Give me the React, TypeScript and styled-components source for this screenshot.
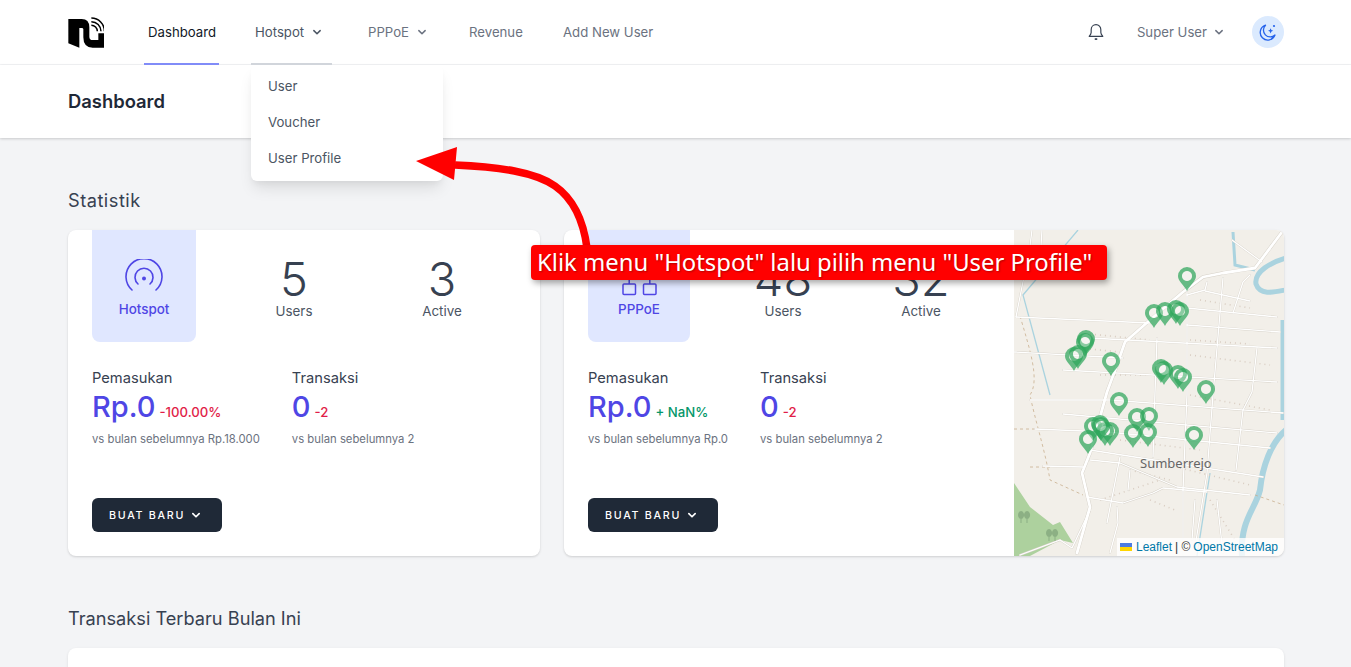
import styled, { createGlobalStyle } from "styled-components";

const GlobalStyle = createGlobalStyle`
  html, body {
    margin: 0;
    height: 667px;
    overflow: hidden;
    background: #f3f4f6;
    font-family: "Inter", "Noto Sans", sans-serif;
  }
  * { box-sizing: border-box; }
`;

const Page = styled.div`
  position: relative;
  width: 1351px;
  height: 667px;
  overflow: hidden;
`;

const Navbar = styled.nav`
  height: 65px;
  background: #fff;
  border-bottom: 1px solid #f3f4f6;
  padding: 0 67px 0 68px;
  display: flex;
  align-items: stretch;
`;

const LogoBox = styled.div`
  width: 36px;
  margin-right: 40px;
  display: flex;
  align-items: center;
`;

const NavLinks = styled.div`
  display: flex;
  gap: 32px;
  flex: 1;
`;

const NavItem = styled.div<{ $active?: boolean; $open?: boolean; $width: number }>`
  position: relative;
  display: flex;
  align-items: center;
  gap: 6px;
  width: ${(p) => p.$width}px;
  height: 65px;
  padding: 0 4px;
  font-size: 13.2px;
  white-space: nowrap;
  color: ${(p) => (p.$active ? "#111827" : p.$open ? "#4b5563" : "#6b7280")};
  border-bottom: 2px solid
    ${(p) => (p.$active ? "#818cf8" : p.$open ? "#d1d5db" : "transparent")};
`;

const Dropdown = styled.div`
  position: absolute;
  top: 65px;
  left: 0;
  width: 192px;
  padding: 3px 0 5px;
  background: #fff;
  border-radius: 6px;
  box-shadow: 0 10px 15px -3px rgba(0, 0, 0, 0.1), 0 4px 6px -2px rgba(0, 0, 0, 0.05);
  z-index: 5;
`;

const DropdownItem = styled.div`
  height: 36px;
  padding: 0 17px;
  display: flex;
  align-items: center;
  font-size: 13.2px;
  color: #4b5563;
`;

const NavRight = styled.div`
  display: flex;
  align-items: center;
`;

const BellButton = styled.div`
  display: flex;
  margin-right: 31px;
  color: #374151;
`;

const UserMenu = styled.div`
  display: flex;
  align-items: center;
  gap: 5px;
  font-size: 13.2px;
  color: #6b7280;
  margin-right: 26px;
`;

const ThemeButton = styled.div`
  width: 32px;
  height: 32px;
  border-radius: 50%;
  background: #dbeafe;
  display: flex;
  align-items: center;
  justify-content: center;
`;

const PageHeader = styled.header`
  height: 73px;
  background: #fff;
  padding: 0 68px 2px;
  display: flex;
  align-items: center;
  box-shadow: 0 1px 3px rgba(0, 0, 0, 0.12), 0 1px 2px rgba(0, 0, 0, 0.06);
`;

const PageTitle = styled.h1`
  margin: 0;
  font-size: 18.4px;
  font-weight: 600;
  color: #1f2937;
`;

const Main = styled.main`
  padding: 50px 67px 0 68px;
`;

const SectionTitle = styled.h2<{ $top?: number; $spacing?: number }>`
  margin: ${(p) => p.$top ?? 0}px 0 17px;
  height: 25px;
  line-height: 25px;
  font-size: 18.2px;
  font-weight: 400;
  letter-spacing: ${(p) => p.$spacing ?? 0}px;
  color: #374151;
`;

const StatsGrid = styled.div`
  display: grid;
  grid-template-columns: 472px 720px;
  gap: 24px;
`;

const Card = styled.section`
  height: 326px;
  background: #fff;
  border-radius: 8px;
  box-shadow: 0 1px 3px rgba(0, 0, 0, 0.1), 0 1px 2px rgba(0, 0, 0, 0.06);
  overflow: hidden;
  display: flex;
`;

const CardBody = styled.div`
  flex: 1;
  min-width: 0;
  padding: 0 24px 24px;
  display: flex;
  flex-direction: column;
  align-items: flex-start;
`;

const TopRow = styled.div`
  display: flex;
  width: 100%;
`;

const Tile = styled.div<{ $width: number }>`
  width: ${(p) => p.$width}px;
  height: 112px;
  flex: none;
  background: #e0e7ff;
  border-radius: 0 0 8px 8px;
  color: #4f46e5;
  display: flex;
  flex-direction: column;
  align-items: center;
  padding-top: 29px;
  font-size: 13.4px;
  font-weight: 500;
`;

const TileLabel = styled.div`
  line-height: 20px;
`;

const Counters = styled.div`
  flex: 1;
  padding-left: 24px;
  display: grid;
  grid-template-columns: 1fr 1fr;
`;

const Counter = styled.div`
  display: flex;
  flex-direction: column;
  align-items: center;
  padding-top: 25px;
`;

const CounterValue = styled.div`
  font-size: 47px;
  line-height: 48px;
  font-weight: 300;
  color: #374151;
`;

const CounterLabel = styled.div`
  font-size: 13.4px;
  line-height: 20px;
  margin-top: -2px;
  color: #4b5563;
`;

const Figures = styled.div`
  display: flex;
  gap: 32px;
  margin-top: 25px;
`;

const FigureLabel = styled.div`
  font-size: 14.7px;
  line-height: 22px;
  color: #374151;
`;

const FigureLine = styled.div`
  display: flex;
  align-items: baseline;
  gap: 4px;
  margin-top: 1px;
  height: 34px;
`;

const FigureValue = styled.span`
  font-size: 29px;
  line-height: 34px;
  font-weight: 500;
  color: #4f46e5;
`;

const Delta = styled.span<{ $up?: boolean }>`
  font-size: 13.2px;
  font-weight: 500;
  color: ${(p) => (p.$up ? "#059669" : "#e11d48")};
`;

const FigureNote = styled.div`
  margin-top: 7px;
  font-size: 11.3px;
  line-height: 16px;
  color: #6b7280;
  white-space: nowrap;
`;

const CreateButton = styled.button`
  margin-top: auto;
  width: 130px;
  height: 34px;
  border: 0;
  border-radius: 6px;
  background: #1f2937;
  color: #fff;
  padding: 0 0 0 17px;
  display: flex;
  align-items: center;
  gap: 4px;
  font-family: inherit;
  font-size: 10.7px;
  font-weight: 500;
  letter-spacing: 0.16em;
  white-space: nowrap;
`;

const MapPanel = styled.div`
  position: relative;
  width: 270px;
  flex: none;
  background: #f2efe9;
`;

const MapDrawing = styled.svg`
  display: block;
  width: 270px;
  height: 326px;
`;

const PlaceLabel = styled.div`
  position: absolute;
  left: 126px;
  top: 224px;
  font-family: "Noto Sans", sans-serif;
  font-size: 13px;
  color: #666;
`;

const Attribution = styled.div`
  position: absolute;
  right: 0;
  bottom: 0;
  width: 167px;
  height: 18px;
  padding: 0 0 0 3px;
  display: flex;
  align-items: center;
  gap: 3px;
  background: rgba(255, 255, 255, 0.8);
  font-family: "Liberation Sans", sans-serif;
  font-size: 12px;
  white-space: nowrap;
  color: #333;
`;

const FlagMark = styled.svg`
  flex: none;
  margin-right: 1px;
`;

const MapLink = styled.span`
  color: #0078a8;
`;

const LowerCard = styled.div`
  height: 40px;
  background: #fff;
  border-radius: 8px 8px 0 0;
  box-shadow: 0 1px 3px rgba(0, 0, 0, 0.1);
`;

const ArrowOverlay = styled.svg`
  position: absolute;
  left: 0;
  top: 0;
  pointer-events: none;
  z-index: 6;
`;

const Callout = styled.div`
  position: absolute;
  left: 531px;
  top: 245px;
  width: 576px;
  height: 35px;
  padding-left: 6px;
  background: #ff0000;
  border-radius: 4px;
  color: #fff;
  font-family: "Noto Sans", "Open Sans", sans-serif;
  font-size: 23.85px;
  line-height: 34px;
  white-space: nowrap;
  text-shadow: 1px 1px 2px rgba(0, 0, 0, 0.3);
  box-shadow: 2px 3px 6px rgba(0, 0, 0, 0.35);
  z-index: 7;
`;

function Chevron({ color = "currentColor", width = 1.8 }: { color?: string; width?: number }) {
  return (
    <svg width="14" height="14" viewBox="0 0 20 20" fill="none" stroke={color} strokeWidth={width * 1.2}>
      <path d="M5.5 8l4.5 4.5L14.5 8" strokeLinecap="round" strokeLinejoin="round" />
    </svg>
  );
}

function Logo() {
  return (
    <svg width="36" height="32" viewBox="54 48 108 96">
      <path
        fill="#000"
        d="M55 57H95Q118 57 118 82V110Q118 120 128 120H145V100H162V143H128Q100 143 100 112V88Q100 84 95 84H88V143L55 130Z"
      />
      <g fill="none" stroke="#000" strokeWidth="4.5">
        <path d="M124 76A18 18 0 0 1 142 94" />
        <path d="M124 65A29 29 0 0 1 153 94" />
        <path d="M124 54A39 39 0 0 1 163 94" />
      </g>
    </svg>
  );
}

function HotspotIcon() {
  return (
    <svg width="40" height="40" viewBox="0 0 40 40" fill="none" stroke="currentColor" strokeWidth="1.6" strokeLinecap="round">
      <path d="M9.5 33A18 18 0 1 1 33.5 33" transform="translate(-1.5 -2)" />
      <path d="M15 27A9 9 0 1 1 27 27" transform="translate(-1 -2)" />
      <circle cx="20" cy="19.5" r="2" fill="currentColor" stroke="none" />
    </svg>
  );
}

function PppoeIcon() {
  return (
    <svg width="40" height="40" viewBox="0 0 40 40" fill="none" stroke="currentColor" strokeWidth="1.5">
      <rect x="4" y="25" width="12.5" height="10.5" rx="1" />
      <rect x="24.5" y="25" width="12.5" height="10.5" rx="1" />
      <path d="M10.2 25V18M30.8 25V18M10 18H31" />
    </svg>
  );
}

const ROADS = [
  "1032,230 1030,246 1016,317",
  "1042,230 1041,246 1030,246",
  "1016,317 1150,323",
  "1187,308 1277,317",
  "1187,325 1280,332",
  "1090,338 1277,348",
  "1014,352 1123,358",
  "1063,370 1277,382",
  "1030,400 1110,400 1283,413",
  "1063,414 1277,433",
  "1035,429 1108,432 1270,448",
  "1090,450 1263,477",
  "1043,466 1083,467",
  "1090,460 1120,463 1177,487 1250,495",
  "1087,497 1123,503 1153,493 1163,488 1207,492",
  "1223,278 1213,395 1207,473 1195,547",
  "1187,292 1187,395 1183,490 1183,556",
  "1157,338 1155,392 1153,457",
  "1207,282 1205,290 1187,295",
  "1205,291 1250,301",
  "1250,275 1243,282 1233,313",
  "1257,348 1252,392 1243,410 1236,470",
  "1120,457 1107,523",
  "1117,507 1118,523 1110,553",
  "1217,500 1223,553",
  "1020,555 1060,540 1072,548 1090,510",
  "1232,240 1262,262",
  "1130,470 1128,490",
  "1195,500 1192,540",
];

const MAIN_ROAD = "1282,232 1255,268 1223,273 1203,277 1183,292 1150,320 1125,342 1117,365 1107,392 1090,453 1082,473 1090,507 1077,553";

const MARKERS = [
  [1187, 277], [1154, 314], [1165, 312], [1176, 310], [1180, 312], [1086, 340], [1085, 343],
  [1074, 357], [1078, 355], [1111, 362], [1161, 369], [1164, 371], [1178, 375], [1183, 378],
  [1206, 390], [1119, 402], [1137, 418], [1149, 417], [1133, 434], [1148, 433], [1194, 436],
  [1093, 427], [1100, 425], [1110, 432], [1105, 432], [1088, 440], [1101, 427],
];

function MapArt() {
  return (
    <MapDrawing viewBox="1014 230 270 326">
      <path d="M1014 483L1030 507L1053 525L1060 522L1073 543L1060 540L1030 556H1014Z" fill="#add19e" />
      <g fill="none" stroke="#aad3df">
        <path d="M1290 257C1270 262 1254 272 1256 284C1260 296 1275 292 1285 290" strokeWidth="5" />
        <path d="M1290 427C1270 440 1262 470 1260 490C1255 510 1240 520 1242 556" strokeWidth="6" />
        <path d="M1283 320V420" strokeWidth="5" />
        <path d="M1233 232L1235 265L1255 270" strokeWidth="3" />
        <path d="M1078 230L1023 295L1050 395" strokeWidth="1.3" />
        <path d="M1210 473L1197 556" strokeWidth="1.3" />
      </g>
      <g fill="none" stroke="#c9b08f" strokeWidth="0.8" strokeDasharray="3 3">
        <path d="M1020 316C1030 350 1040 380 1030 395C1035 420 1045 450 1050 480L1083 495" />
        <path d="M1014 429H1040M1030 467H1050" />
        <path d="M1255 495L1284 505" />
      </g>
      <g fill="none" stroke="#d9cdc2" strokeWidth="1.6" strokeDasharray="1 4">
        <path d="M1090 334L1150 340M1080 348L1120 352M1100 375H1180M1190 340L1250 344M1190 355L1270 365" />
        <path d="M1190 395L1270 410M1120 440L1200 450M1180 468L1250 485M1130 470L1170 480M1210 500L1235 540" />
        <path d="M1200 300L1250 308M1150 500L1175 510M1100 500L1160 480" />
      </g>
      <g fill="none" stroke="#d6d1c8" strokeLinejoin="round" strokeLinecap="round">
        {ROADS.map((points) => (
          <polyline key={points} points={points} strokeWidth="2" />
        ))}
        <polyline points={MAIN_ROAD} strokeWidth="3.6" />
      </g>
      <g fill="none" stroke="#fff" strokeLinejoin="round" strokeLinecap="round">
        {ROADS.map((points) => (
          <polyline key={points} points={points} strokeWidth="1.3" />
        ))}
        <polyline points={MAIN_ROAD} strokeWidth="2.8" />
      </g>
      <g fill="#7fa37a" opacity="0.7">
        <path d="M1021 519a3 4 0 1 1 .1 0zM1020.5 518h1v5h-1zM1027 519a3 4 0 1 1 .1 0zM1026.5 518h1v5h-1z" />
        <path d="M1049 537a3 4 0 1 1 .1 0zM1048.5 536h1v5h-1zM1055 537a3 4 0 1 1 .1 0zM1054.5 536h1v5h-1z" />
      </g>
      {MARKERS.map(([x, y], i) => (
        <g key={i} transform={`translate(${x} ${y})`} opacity="0.72">
          <path
            fill="#2fa75c"
            fillRule="evenodd"
            d="M0 14C-3 8 -9 4.5 -9 -1A9 9 0 0 1 9 -1C9 4.5 3 8 0 14ZM0 -6A5 5 0 1 0 0.01 -6Z"
          />
          <circle cx="0" cy="-1" r="5" fill="#fff" opacity="0.35" />
        </g>
      ))}
    </MapDrawing>
  );
}

export default function App() {
  return (
    <Page>
      <GlobalStyle />
      <Navbar>
        <LogoBox>
          <Logo />
        </LogoBox>
        <NavLinks>
          <NavItem $active $width={75}>Dashboard</NavItem>
          <NavItem $open $width={81}>
            Hotspot <Chevron />
            <Dropdown>
              <DropdownItem>User</DropdownItem>
              <DropdownItem>Voucher</DropdownItem>
              <DropdownItem>User Profile</DropdownItem>
            </Dropdown>
          </NavItem>
          <NavItem $width={69}>
            PPPoE <Chevron />
          </NavItem>
          <NavItem $width={62}>Revenue</NavItem>
          <NavItem $width={100}>Add New User</NavItem>
        </NavLinks>
        <NavRight>
          <BellButton>
            <svg width="20" height="20" viewBox="0 0 24 24" fill="none" stroke="currentColor" strokeWidth="1.4" strokeLinejoin="round">
              <path d="M12 3.2c-3.4 0-5.8 2.6-5.8 6v3.4c0 1.8-1.2 3.2-2.4 4.6h16.4c-1.2-1.4-2.4-2.8-2.4-4.6V9.2c0-3.4-2.4-6-5.8-6z" />
              <path d="M10.5 20.5h3" strokeWidth="2" />
            </svg>
          </BellButton>
          <UserMenu>
            Super User <Chevron />
          </UserMenu>
          <ThemeButton>
            <svg width="20" height="20" viewBox="0 0 20 20" fill="none" stroke="#2563eb" strokeWidth="1.3" strokeLinejoin="round">
              <path d="M7.5 3.2A7.6 7.6 0 1 0 17 13a6.4 6.4 0 0 1-9.5-9.8z" />
              <path d="M12.6 6.2l.8 1.8 1.8.8-1.8.8-.8 1.8-.8-1.8-1.8-.8 1.8-.8z" fill="#2563eb" stroke="none" />
              <circle cx="16" cy="4" r="1.1" fill="#2563eb" stroke="none" />
            </svg>
          </ThemeButton>
        </NavRight>
      </Navbar>

      <PageHeader>
        <PageTitle>Dashboard</PageTitle>
      </PageHeader>

      <Main>
        <SectionTitle $spacing={0.5}>Statistik</SectionTitle>
        <StatsGrid>
          <Card>
            <CardBody>
              <TopRow>
                <Tile $width={104}>
                  <HotspotIcon />
                  <TileLabel>Hotspot</TileLabel>
                </Tile>
                <Counters>
                  <Counter>
                    <CounterValue>5</CounterValue>
                    <CounterLabel>Users</CounterLabel>
                  </Counter>
                  <Counter>
                    <CounterValue>3</CounterValue>
                    <CounterLabel>Active</CounterLabel>
                  </Counter>
                </Counters>
              </TopRow>
              <Figures>
                <div>
                  <FigureLabel>Pemasukan</FigureLabel>
                  <FigureLine>
                    <FigureValue>Rp.0</FigureValue>
                    <Delta>-100.00%</Delta>
                  </FigureLine>
                  <FigureNote>vs bulan sebelumnya Rp.18.000</FigureNote>
                </div>
                <div>
                  <FigureLabel>Transaksi</FigureLabel>
                  <FigureLine>
                    <FigureValue>0</FigureValue>
                    <Delta>-2</Delta>
                  </FigureLine>
                  <FigureNote>vs bulan sebelumnya 2</FigureNote>
                </div>
              </Figures>
              <CreateButton>
                BUAT BARU <Chevron color="#fff" width={2} />
              </CreateButton>
            </CardBody>
          </Card>

          <Card>
            <CardBody>
              <TopRow>
                <Tile $width={102}>
                  <PppoeIcon />
                  <TileLabel>PPPoE</TileLabel>
                </Tile>
                <Counters>
                  <Counter>
                    <CounterValue>48</CounterValue>
                    <CounterLabel>Users</CounterLabel>
                  </Counter>
                  <Counter>
                    <CounterValue>32</CounterValue>
                    <CounterLabel>Active</CounterLabel>
                  </Counter>
                </Counters>
              </TopRow>
              <Figures>
                <div>
                  <FigureLabel>Pemasukan</FigureLabel>
                  <FigureLine>
                    <FigureValue>Rp.0</FigureValue>
                    <Delta $up>+ NaN%</Delta>
                  </FigureLine>
                  <FigureNote>vs bulan sebelumnya Rp.0</FigureNote>
                </div>
                <div>
                  <FigureLabel>Transaksi</FigureLabel>
                  <FigureLine>
                    <FigureValue>0</FigureValue>
                    <Delta>-2</Delta>
                  </FigureLine>
                  <FigureNote>vs bulan sebelumnya 2</FigureNote>
                </div>
              </Figures>
              <CreateButton>
                BUAT BARU <Chevron color="#fff" width={2} />
              </CreateButton>
            </CardBody>
            <MapPanel>
              <MapArt />
              <PlaceLabel>Sumberrejo</PlaceLabel>
              <Attribution>
                <FlagMark width="12" height="8" viewBox="0 0 12 8">
                  <rect width="12" height="4" fill="#4c7be1" />
                  <rect y="4" width="12" height="4" fill="#ffd500" />
                </FlagMark>
                <MapLink>Leaflet</MapLink> | © <MapLink>OpenStreetMap</MapLink>
              </Attribution>
            </MapPanel>
          </Card>
        </StatsGrid>

        <SectionTitle $top={50}>Transaksi Terbaru Bulan Ini</SectionTitle>
        <LowerCard />
      </Main>

      <ArrowOverlay width="1351" height="667" viewBox="0 0 1351 667">
        <path d="M455 165C500 167 535 172 555 186C575 200 584 225 587 248" fill="none" stroke="#ff0000" strokeWidth="7.5" />
        <path d="M416 161L457 147L454 180Z" fill="#ff0000" />
      </ArrowOverlay>
      <Callout>Klik menu "Hotspot" lalu pilih menu "User Profile"</Callout>
    </Page>
  );
}
